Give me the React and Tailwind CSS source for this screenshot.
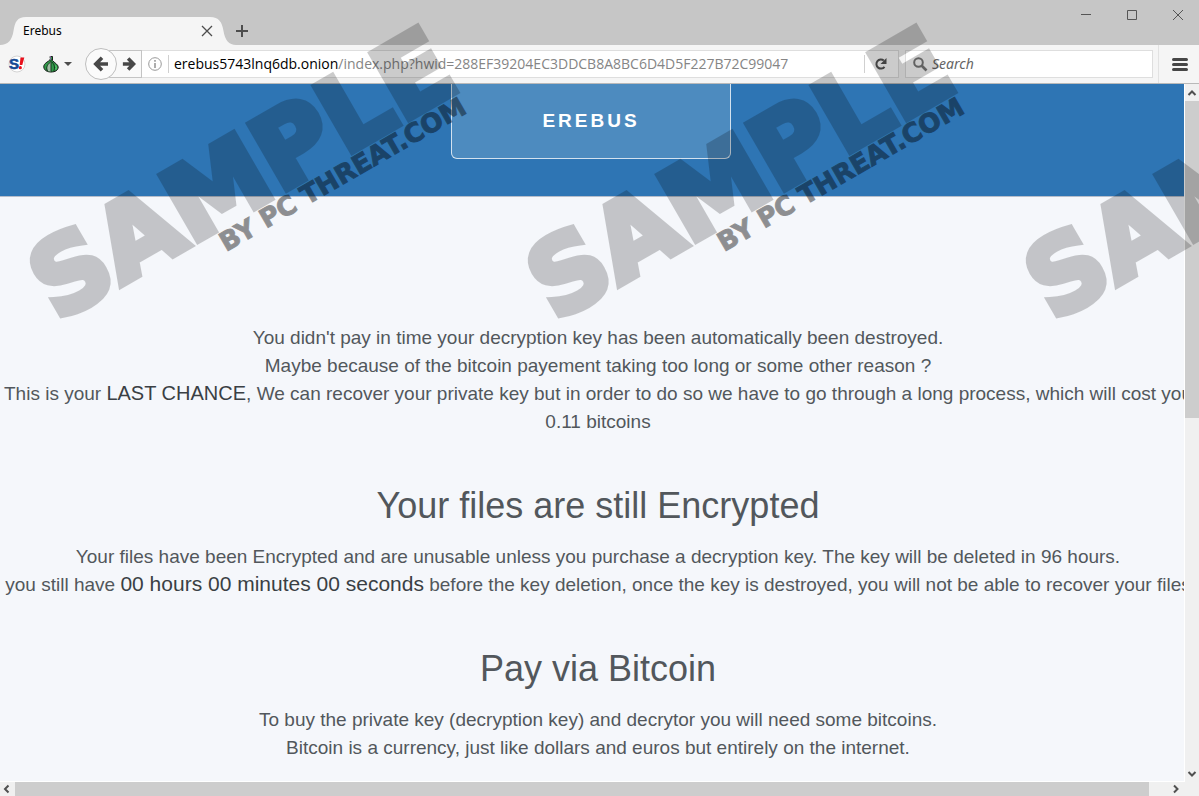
import React, { useState } from 'react';

const PATH = '/index.php?hwid=288EF39204EC3DDCB8A8BC6D4D5F227B72C99047';

const Chevron = ({ d }) => (
  <svg className="w-[14px] h-[14px]" viewBox="0 0 14 14" fill="none" stroke="#505050" strokeWidth="2">
    <path d={d} />
  </svg>
);

const TitleBar = () => (
  <header className="flex h-[45px] shrink-0 bg-[#c6c6c6]">
    <div className="relative self-end w-[236px] h-7 flex items-center justify-between pl-[23px] pr-[23px]">
      <svg className="absolute left-0 top-0 w-[236px] h-7" viewBox="0 0 236 28" fill="#f5f5f5">
        <path d="M0 28 C8 28 12 23 13.500 14 C15 5 17 0 26 0 H210 C219 0 222 5 223.500 14 C225 23 229 28 236 28 Z" />
      </svg>
      <span className="relative text-xs text-black">Erebus</span>
      <button aria-label="Close tab" className="relative">
        <svg className="w-3 h-3" viewBox="0 0 12 12" fill="none" stroke="#4d4d4d" strokeWidth="1.300">
          <path d="M1 1 L11 11 M11 1 L1 11" />
        </svg>
      </button>
    </div>
    <button aria-label="New tab" className="self-end h-7">
      <svg className="w-3 h-3" viewBox="0 0 12 12" stroke="#4d4d4d" strokeWidth="2">
        <path d="M6 0 V12 M0 6 H12" />
      </svg>
    </button>

    {/* Window controls */}
    <div className="ml-auto flex items-center gap-9 h-[30px] pr-4">
      <button aria-label="Minimize">
        <svg className="w-[10px] h-[10px]" viewBox="0 0 10 10" stroke="#555"><path d="M0 4.500 H10" /></svg>
      </button>
      <button aria-label="Maximize">
        <svg className="w-[10px] h-[10px]" viewBox="0 0 10 10" fill="none" stroke="#555"><path d="M.5 .5 H9.500 V9.500 H.5 Z" /></svg>
      </button>
      <button aria-label="Close">
        <svg className="w-[10px] h-[10px]" viewBox="0 0 10 10" stroke="#555"><path d="M0 0 L10 10 M10 0 L0 10" /></svg>
      </button>
    </div>
  </header>
);

const Toolbar = () => {
  const [path, setPath] = useState(PATH);
  const [query, setQuery] = useState('');

  return (
    <nav className="flex items-center h-[39px] shrink-0 bg-[#f5f5f5] border-b border-[#b9b9b9] pl-2">
      {/* NoScript */}
      <button aria-label="NoScript">
        <svg className="w-[18px] h-[18px]" viewBox="0 0 18 18">
          <circle cx="9" cy="9" r="8" fill="#fff" stroke="#d4d4d4" />
          <text x="1" y="14" fill="#164a94" stroke="#164a94" strokeWidth=".6" fontFamily="Liberation Sans, sans-serif" fontWeight="700" fontSize="15">S</text>
          <path d="M12.500 2.500 h3.800 l-2 7.500 h-2.600 Z" fill="#e8101c" />
          <circle cx="12.300" cy="12.700" r="1.600" fill="#e8101c" />
        </svg>
      </button>
      {/* Tor button */}
      <button aria-label="Tor" className="flex items-center gap-1 ml-4">
        <svg className="w-[18px] h-[18px]" viewBox="0 0 18 18">
          <path d="M8 1.500 Q9 4 7.500 5.500 C4 7.500 1.500 9.500 1.800 12 C2 15.500 5.500 17 9 17 C13 17 16.200 15.500 16.200 12 C16.200 9.500 12 7.500 10.500 5.500 L10.500 1.500 Z" fill="#2f9a48" stroke="#1d1d1d" />
          <path d="M9 6.500 C5 9 4 13 6 16 L9 16.500 Z" fill="#a3bda6" />
          <path d="M9 4 V16.500 M8.500 7 C4.500 10 4 13.500 5.500 16 M10 7 C13 10 13 14 11.500 16.500" fill="none" stroke="#15351e" />
          <path d="M13.800 14.500 Q15 12 13.500 10.500" fill="none" stroke="#66dc7c" />
          <path d="M8.500 1 V5" stroke="#7a6694" />
        </svg>
        <svg className="w-2 h-1" viewBox="0 0 8 4" fill="#4d4d4d"><path d="M0 0 H8 L4 4 Z" /></svg>
      </button>

      <div className="flex items-center ml-[13px]">
        <button aria-label="Back" className="relative z-10 w-8 h-8 rounded-full border border-[#bebebe] bg-[#fbfbfb] flex items-center justify-center">
          <svg className="w-4 h-4" viewBox="0 0 16 16" fill="none" stroke="#484848" strokeWidth="3.600">
            <path d="M15 8 H3 M9 1.800 L2.800 8 L9 14.200" />
          </svg>
        </button>
        <button aria-label="Forward" className="w-[33px] h-7 -ml-2 border border-[#c4c4c4] bg-[#f9f9f9] flex items-center justify-end pr-[5px]">
          <svg className="w-[14px] h-[14px]" viewBox="0 0 16 16" fill="none" stroke="#484848" strokeWidth="4">
            <path d="M1 8 H12 M7 1.800 L13.200 8 L7 14.200" />
          </svg>
        </button>
      </div>

      {/* Address bar */}
      <div className="flex flex-1 items-center h-7 min-w-0 bg-white border border-l-0 border-[#dedede] pl-[6px] text-sm font-['Open_Sans','Noto_Sans',sans-serif]">
        <svg className="w-[14px] h-[14px] shrink-0" viewBox="0 0 14 14" fill="none" stroke="#999">
          <circle cx="7" cy="7" r="6.300" />
          <path d="M7 6 V11 M7 3 V4.700" strokeWidth="1.600" />
        </svg>
        <div className="w-px h-[18px] bg-[#d0d0d0] ml-[6px] mr-[5px]" />
        <label htmlFor="url" className="text-black">erebus5743lnq6db.onion</label>
        <input
          id="url"
          value={path}
          onChange={(e) => setPath(e.target.value)}
          className="flex-1 min-w-0 bg-transparent text-[#858585] outline-none"
        />
        <button aria-label="Reload" className="flex items-center h-[18px] border-l border-[#d0d0d0] pl-[9px] pr-[10px]">
          <svg className="w-[14px] h-[14px]" viewBox="0 0 14 14">
            <path d="M10.500 9.800 A4.500 4.500 0 1 1 9.800 3.600" fill="none" stroke="#555" strokeWidth="2" />
            <path d="M12.500 1 V7 H6.500 Z" fill="#555" />
          </svg>
        </button>
      </div>

      {/* Search box */}
      <div className="flex items-center h-7 w-[248px] ml-[6px] mr-[5px] bg-white border border-[#dedede] pl-[7px] gap-1 text-sm">
        <svg className="w-[15px] h-[15px] shrink-0" viewBox="0 0 15 15" fill="none" stroke="#7b7b7b">
          <circle cx="5.500" cy="5.500" r="4.300" strokeWidth="2" />
          <path d="M8.500 8.500 L13.500 13.500" strokeWidth="2.600" />
        </svg>
        <input
          aria-label="Search"
          placeholder="Search"
          value={query}
          onChange={(e) => setQuery(e.target.value)}
          className="flex-1 min-w-0 bg-transparent italic outline-none placeholder:text-[#666]"
        />
      </div>
      <button aria-label="Menu" className="flex items-center h-full border-l border-[#e2e2e2] pl-[13px] pr-[11px]">
        <svg className="w-4 h-[13px]" viewBox="0 0 16 13" stroke="#464646" strokeWidth="3" strokeLinecap="round">
          <path d="M1.500 1.500 H14.500 M1.500 6.500 H14.500 M1.500 11.500 H14.500" />
        </svg>
      </button>
    </nav>
  );
};

const Heading = ({ children }) => (
  <h2 className="mt-12 mb-4 text-4xl leading-[43px]">{children}</h2>
);

const Page = () => (
  <main className="flex-1 min-w-0 overflow-hidden bg-[#f5f7fb] border-r border-b border-white font-['Liberation_Sans',Arial,sans-serif]">
    <div className="flex justify-center items-start h-[113px] bg-[#2e75b4] border-b border-[#b5bdcb] pr-[2px]">
      <h1 className="w-[280px] h-[75px] flex items-center justify-center rounded-b-md border border-t-0 border-[#d3e2ef] bg-[#4d8bbf] text-[19px] font-bold tracking-[3px] text-white">
        EREBUS
      </h1>
    </div>
    <div className="-mr-3 pt-[127px] text-center whitespace-nowrap text-[19px] leading-7 text-[#52575c]">
      <p>You didn't pay in time your decryption key has been automatically been destroyed.</p>
      <p>Maybe because of the bitcoin payement taking too long or some other reason ?</p>
      <p>
        This is your <strong className="font-normal text-xl leading-none text-[#3a3f44]">LAST CHANCE</strong>, We can recover your private key but in order to do so we have to go through a long process, which will cost you
      </p>
      <p>0.11 bitcoins</p>
      <Heading>Your files are still Encrypted</Heading>
      <p>Your files have been Encrypted and are unusable unless you purchase a decryption key. The key will be deleted in 96 hours.</p>
      <p>
        you still have <strong className="font-normal text-[21px] leading-none text-[#3a3f44]">00 hours 00 minutes 00 seconds</strong> before the key deletion, once the key is destroyed, you will not be able to recover your files
      </p>
      <Heading>Pay via Bitcoin</Heading>
      <p>To buy the private key (decryption key) and decrytor you will need some bitcoins.</p>
      <p>Bitcoin is a currency, just like dollars and euros but entirely on the internet.</p>
    </div>
  </main>
);

const Watermark = () => (
  <div className="absolute inset-0 flex overflow-hidden pointer-events-none" aria-hidden="true">
    {[0, 1, 2].map((i) => (
      <svg key={i} className="w-[498px] h-[340px] shrink-0 overflow-visible" viewBox="0 0 498 340" fontFamily="DejaVu Sans, sans-serif" fontWeight="700" stroke="#000">
        <text transform="translate(57 322) rotate(-30)" fontSize="103" strokeWidth="7" opacity="0.2">SAMPLE</text>
        <text transform="translate(226 252) rotate(-30)" fontSize="26" strokeWidth="1" opacity="0.42">BY PC THREAT.COM</text>
      </svg>
    ))}
  </div>
);

const App = () => (
  <div className="relative flex flex-col h-screen overflow-hidden bg-[#f0f0f0] font-['Noto_Sans','Open_Sans',sans-serif]">
    <TitleBar />
    <Toolbar />
    <div className="flex flex-1 min-h-0">
      <Page />
      <div className="flex flex-col w-[14px]">
        <button aria-label="Scroll up" className="h-[17px]"><Chevron d="M3.500 9 L7 5.500 L10.500 9" /></button>
        <div className="flex-1">
          <div className="h-[47.7%] bg-[#cdcdcd]" />
        </div>
        <button aria-label="Scroll down" className="h-[17px]"><Chevron d="M3.500 5 L7 8.500 L10.500 5" /></button>
      </div>
    </div>
    <div className="flex h-[14px] shrink-0 pr-4">
      <button aria-label="Scroll left" className="w-[15px]"><Chevron d="M8.500 3.500 L5 7 L8.500 10.500" /></button>
      <div className="flex-1 pr-5">
        <div className="h-full bg-[#cdcdcd]" />
      </div>
      <button aria-label="Scroll right" className="w-[14px]"><Chevron d="M5 3.500 L8.500 7 L5 10.500" /></button>
    </div>
    <Watermark />
  </div>
);

export default App;
